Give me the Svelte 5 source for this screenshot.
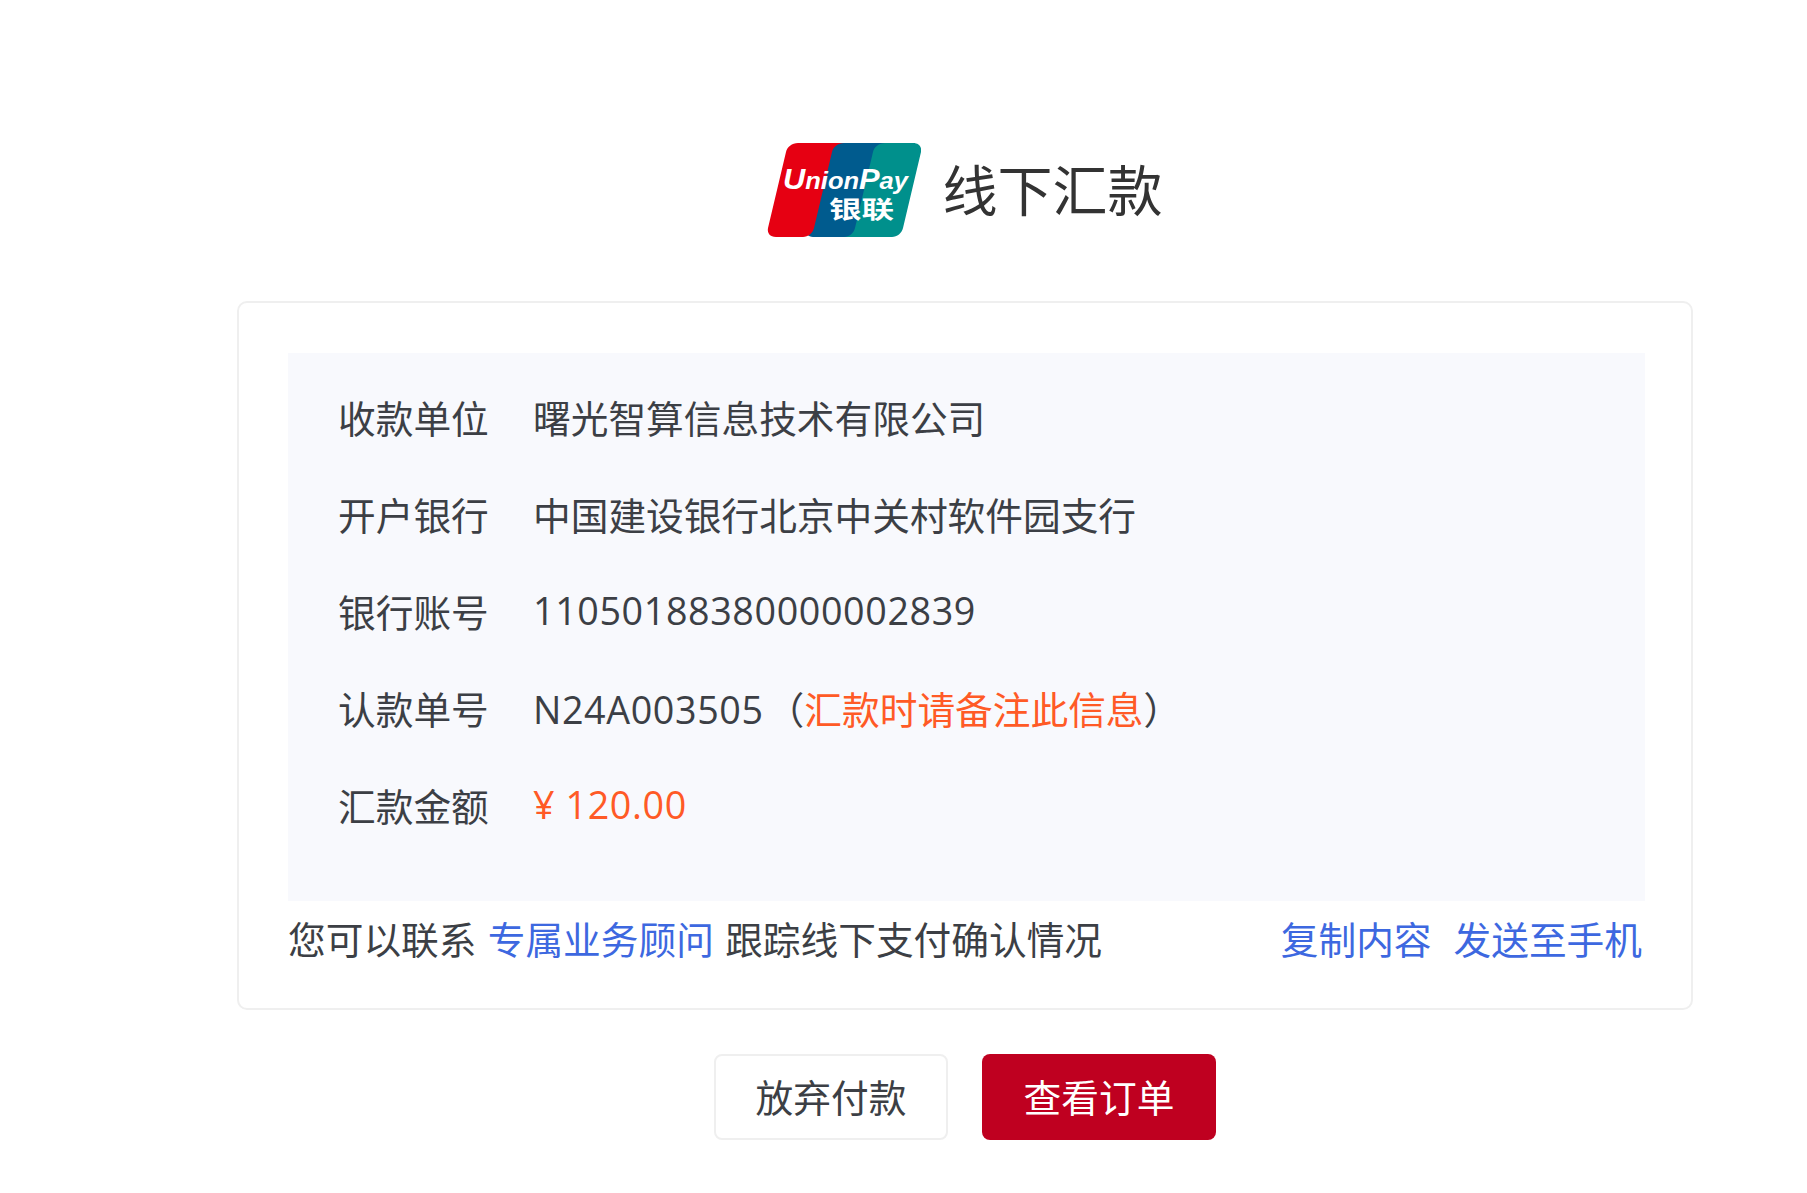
<script>
	const rows = [
		{ label: '收款单位', value: '曙光智算信息技术有限公司' },
		{ label: '开户银行', value: '中国建设银行北京中关村软件园支行' },
		{ label: '银行账号', value: '11050188380000002839', num: true }
	];
</script>

<div class="page">
	<header class="title">
		<svg class="logo" viewBox="0 0 154 94" width="154" height="94">
			<path d="M100 0h46c6 0 9 4 8 9l-18 76c-1 5-6 9-11 9H70z" fill="#00908c" />
			<path d="M72 0h46c-6 0-11 4-12 9L88 85c-1 5-6 9-11 9H46c-5 0-8-4-7-9L57 9c1-5 9-9 15-9z" fill="#005b8e" />
			<path d="M31 0h46c-6 0-11 4-12 9L47 85c-1 5-6 9-11 9H9c-6 0-9-4-8-9L19 9c1-5 6-9 12-9z" fill="#e60012" />
			<text class="logo-en" x="16" y="46" textLength="125" lengthAdjust="spacingAndGlyphs"><tspan class="big">U</tspan>nion<tspan class="big">P</tspan>ay</text>
			<text class="logo-cn" x="62" y="75" textLength="65" lengthAdjust="spacingAndGlyphs">银联</text>
		</svg>
		<h1>线下汇款</h1>
	</header>

	<section class="card">
		<div class="info">
			{#each rows as row}
				<div class="row">
					<span class="label">{row.label}</span>
					<span class="value" class:num={row.num}>{row.value}</span>
				</div>
			{/each}
			<div class="row">
				<span class="label">认款单号</span>
				<span class="value"><span class="num">N24A003505</span><span class="note">（<em>汇款时请备注此信息</em>）</span></span>
			</div>
			<div class="row">
				<span class="label">汇款金额</span>
				<span class="value amount num">¥ 120.00</span>
			</div>
		</div>
		<div class="foot">
			<p>您可以联系 <a href="#advisor">专属业务顾问</a> 跟踪线下支付确认情况</p>
			<div class="links">
				<a href="#copy">复制内容</a>
				<a href="#send">发送至手机</a>
			</div>
		</div>
	</section>

	<div class="actions">
		<button class="ghost">放弃付款</button>
		<button class="primary">查看订单</button>
	</div>
</div>

<style>
	:global(body) {
		background: #fff;
	}

	.page {
		box-sizing: border-box;
		height: 1193px;
		padding: 143px 114px 0 237px;
		font-family: 'Open Sans', 'Noto Sans CJK SC', sans-serif;
		font-size: 37.7px;
		color: #3c3f45;
	}

	.title {
		display: flex;
		justify-content: center;
		align-items: center;
		gap: 21px;
		height: 94px;
	}

	.logo {
		display: block;
	}

	.logo-en {
		font-family: 'Liberation Sans', sans-serif;
		font-size: 24px;
		font-weight: 700;
		font-style: italic;
		fill: #fff;
	}

	.big {
		font-size: 29px;
	}

	.logo-cn {
		font-family: 'Noto Sans CJK SC', sans-serif;
		font-size: 24px;
		font-weight: 700;
		fill: #fff;
	}

	h1 {
		margin: 0;
		padding-bottom: 6px;
		font-size: 55px;
		font-weight: 400;
		color: #333;
	}

	.card {
		box-sizing: border-box;
		height: 709px;
		margin-top: 64px;
		padding: 50px 46px 0 49px;
		border: 2px solid #efefef;
		border-radius: 10px;
	}

	.info {
		box-sizing: border-box;
		height: 548px;
		padding: 15px 50px 0;
		background: #f8f9fd;
	}

	.row {
		display: flex;
		align-items: center;
		height: 97px;
		white-space: nowrap;
	}

	.label {
		width: 195px;
		flex: none;
	}

	.num {
		letter-spacing: 0.6px;
	}

	.note {
		margin-left: 3px;
	}

	.note em {
		font-style: normal;
		color: #ff5a26;
	}

	.amount {
		color: #ff5a26;
	}

	.foot {
		display: flex;
		justify-content: space-between;
		align-items: center;
		height: 72px;
		white-space: nowrap;
	}

	.foot p {
		margin: 0;
		word-spacing: 1.5px;
	}

	a {
		color: #3d68e0;
		text-decoration: none;
	}

	.links {
		display: flex;
		gap: 22px;
		padding-right: 3px;
	}

	.actions {
		display: flex;
		justify-content: center;
		gap: 34px;
		margin-top: 44px;
	}

	button {
		box-sizing: border-box;
		width: 234px;
		height: 86px;
		padding-bottom: 4px;
		border-radius: 8px;
		font: inherit;
		cursor: pointer;
	}

	.ghost {
		border: 2px solid #efefef;
		background: #fff;
		color: #3c3f45;
	}

	.primary {
		border: none;
		background: #bf0020;
		color: #fff;
	}
</style>
